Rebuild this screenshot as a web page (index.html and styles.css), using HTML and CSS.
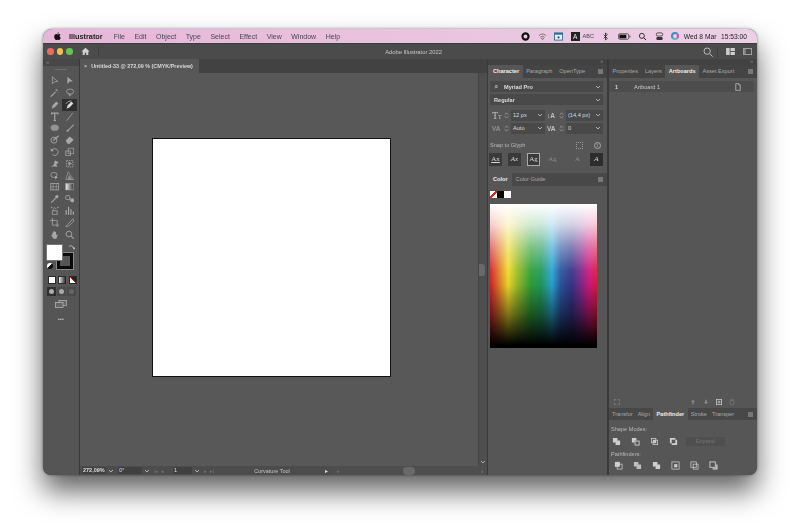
FILE: index.html
```html
<!DOCTYPE html>
<html lang="en">
<head>
<meta charset="utf-8">
<title>Adobe Illustrator 2022</title>
<link rel="stylesheet" href="styles.css">
</head>
<body>
<svg class="defs" aria-hidden="true">
  <symbol id="chev" viewBox="0 0 6 6"><path d="M1 2l2 2 2-2" fill="none" stroke="currentColor" stroke-width="1"/></symbol>
  <symbol id="updown" viewBox="0 0 6 10"><path d="M1 4l2-2 2 2M1 6l2 2 2-2" fill="none" stroke="currentColor" stroke-width=".8"/></symbol>
  <symbol id="menu" viewBox="0 0 6 6"><rect width="6" height="6" fill="currentColor"/></symbol>
  <symbol id="unite" viewBox="0 0 10 10"><path d="M1 1h5v3h3v5H4V6H1z" fill="currentColor"/></symbol>
  <symbol id="minus" viewBox="0 0 10 10"><path d="M1 1h5v3H4v2H1z" fill="currentColor"/><rect x="4.5" y="4.5" width="4.500" height="4.500" fill="none" stroke="currentColor"/></symbol>
  <symbol id="inter" viewBox="0 0 10 10"><rect x="1.500" y="1.500" width="5" height="5" fill="none" stroke="currentColor" stroke-width=".8"/><rect x="3.500" y="3.500" width="5" height="5" fill="none" stroke="currentColor" stroke-width=".8"/><rect x="3.500" y="3.500" width="3" height="3" fill="currentColor"/></symbol>
  <symbol id="excl" viewBox="0 0 10 10"><path d="M1 1h6v2H3v4H1zM7 3h2v6H3V7h4z" fill="currentColor"/></symbol>
  <symbol id="pf1" viewBox="0 0 10 10"><rect x="1" y="1" width="5.500" height="5.500" fill="currentColor"/><rect x="3.500" y="3.500" width="5.500" height="5.500" fill="none" stroke="currentColor" stroke-width=".8"/></symbol>
  <symbol id="pf2" viewBox="0 0 10 10"><path d="M1 1h5v3h3v5H4V6H1z" fill="currentColor" opacity=".85"/></symbol>
  <symbol id="pf4" viewBox="0 0 10 10"><rect x="1" y="1" width="8" height="8" fill="none" stroke="currentColor" stroke-width=".8"/><rect x="3.500" y="3.500" width="3.500" height="3.500" fill="currentColor"/></symbol>
  <symbol id="pf5" viewBox="0 0 10 10"><rect x="1" y="1" width="6" height="6" fill="none" stroke="currentColor" stroke-width=".8"/><rect x="3.500" y="3.500" width="5.500" height="5.500" fill="none" stroke="currentColor" stroke-width=".8"/></symbol>
  <symbol id="pf6" viewBox="0 0 10 10"><rect x="1" y="1" width="6" height="6" fill="none" stroke="currentColor"/><path d="M8 4h1.500v5.500H4V8h4z" fill="currentColor"/></symbol>
</svg>

<div class="window">
  <header class="menubar">
    <svg class="apple" viewBox="0 0 10 12"><path d="M7 0c0 1.200-1 2.300-2.100 2.300C4.800 1.100 6 .1 7 0zM5 3c.6 0 1.200-.5 2.200-.5.8 0 1.600.4 2.100 1.100-1.800 1-1.500 3.600.4 4.300-.5 1.300-1.500 3.100-2.600 3.100-.8 0-1-.5-2-.5s-1.300.5-2 .5C1.800 11 .3 8.500.3 6.300.3 4 1.700 2.600 3.200 2.600 4 2.600 4.500 3 5 3z"/></svg>
    <strong class="app">Illustrator</strong>
    <nav class="menus"><span>File</span><span>Edit</span><span>Object</span><span>Type</span><span>Select</span><span>Effect</span><span>View</span><span>Window</span><span>Help</span></nav>
    <div class="status">
      <svg class="st" viewBox="0 0 10 10"><circle cx="5" cy="5" r="3.400" fill="none" stroke="#111" stroke-width="2.400"/></svg>
      <svg class="st" viewBox="0 0 10 10"><path d="M1 4a6 6 0 0 1 8 0M2.500 5.700a4 4 0 0 1 5 0M5 8.500l-1.200-1.300a2 2 0 0 1 2.400 0z" fill="none" stroke="#555" stroke-width=".8"/></svg>
      <svg class="st" viewBox="0 0 10 10"><rect x=".5" y="1" width="9" height="8" fill="#e8f0f6" stroke="#2d6d9a"/><rect x=".5" y="1" width="9" height="2" fill="#2d6d9a"/><rect x="4" y="5" width="2" height="2" fill="#234"/></svg>
      <span class="kbd"><b>A</b><em>ABC</em></span>
      <svg class="st" viewBox="0 0 10 10"><path d="M3 3l4 4-2 2V1l2 2-4 4" fill="none" stroke="#222" stroke-width=".9"/></svg>
      <svg class="st wide" viewBox="0 0 14 8"><rect x=".5" y="1" width="11" height="6" rx="1.500" fill="none" stroke="#222" stroke-width=".7"/><rect x="1.500" y="2" width="7.500" height="4" fill="#111"/><rect x="12.300" y="3" width="1" height="2" fill="#333"/></svg>
      <svg class="st" viewBox="0 0 10 10"><circle cx="4.300" cy="4.300" r="2.800" fill="none" stroke="#222"/><path d="M6.300 6.300L9 9" stroke="#222" stroke-width="1.100"/></svg>
      <svg class="st" viewBox="0 0 10 10"><rect x="1.500" y="1" width="7" height="3.500" rx="1.500" fill="none" stroke="#222" stroke-width=".8"/><rect x="1.500" y="5.500" width="7" height="3.500" rx="1.500" fill="#333"/></svg>
      <span class="siri"></span>
      <span class="clock">Wed 8 Mar</span>
      <span class="clock">15:53:00</span>
    </div>
  </header>

  <div class="titlebar">
    <div class="tb-left">
      <i class="light red"></i><i class="light yellow"></i><i class="light green"></i>
      <svg class="home" viewBox="0 0 10 10"><path d="M5 .8L.4 5h1.500v4h2.300V6.300h1.600V9h2.300V5h1.500z" fill="#cfcfcf"/></svg>
      <i class="tb-sep"></i>
    </div>
    <div class="tb-title">Adobe Illustrator 2022</div>
    <div class="tb-right">
      <svg class="tb-ic" viewBox="0 0 12 12"><circle cx="5" cy="5" r="3.800" fill="none" stroke="#c4c4c4" stroke-width="1.100"/><path d="M8 8l3.500 3.500" stroke="#c4c4c4" stroke-width="1.200"/></svg>
      <i class="tb-sep"></i>
      <svg class="tb-ic2" viewBox="0 0 10 8"><rect width="4" height="8" fill="#cfcfcf"/><rect x="5" width="5" height="3.500" fill="#cfcfcf"/><rect x="5" y="4.500" width="5" height="3.500" fill="#cfcfcf"/></svg>
      <svg class="tb-ic2" viewBox="0 0 10 8"><rect x=".5" y=".5" width="9" height="7" fill="none" stroke="#aaa"/><rect x="1" y="1" width="2" height="6" fill="#888"/></svg>
    </div>
  </div>

  <div class="workspace">
    <aside class="tools">
      <div class="tools-top">&laquo;</div>
      <div class="tools-grip"></div>
      <div class="tool-grid">
        <svg viewBox="0 0 12 12"><path d="M3 1l7 6H6l-3 3z" fill="none" stroke="currentColor"/></svg>
        <svg viewBox="0 0 12 12"><path d="M3 1l7 6H6l-3 3z" fill="currentColor"/></svg>
        <svg viewBox="0 0 12 12"><path d="M1 11l6-6" stroke="currentColor" stroke-width="1.400"/><path d="M8 1v3M10 3H7M10.500 6l-1-1" stroke="currentColor" stroke-width=".8"/></svg>
        <svg viewBox="0 0 12 12"><ellipse cx="6.500" cy="4.500" rx="4.500" ry="3.200" fill="none" stroke="currentColor"/><path d="M4 6l2 5 1-2 2 1z" fill="currentColor"/></svg>
        <svg viewBox="0 0 12 12"><path d="M2 11l1.500-4.500L8 2l2.500 2.500L6 9z" fill="currentColor"/></svg>
        <span class="tool-on"><svg viewBox="0 0 12 12"><path d="M2 11l1.500-4.500L8 2l2.500 2.500L6 9z" fill="currentColor"/><path d="M1 5q2-4 7-4" fill="none" stroke="currentColor" stroke-width=".8"/></svg></span>
        <svg viewBox="0 0 12 12"><path d="M2 3V1.500h8V3M6 1.500V11M4.500 11h3" fill="none" stroke="currentColor" stroke-width="1.500"/></svg>
        <svg viewBox="0 0 12 12"><path d="M2 11L10 1" stroke="currentColor"/></svg>
        <svg viewBox="0 0 12 12"><ellipse cx="6" cy="6" rx="5" ry="3.800" fill="currentColor" opacity=".75" stroke="currentColor" stroke-width=".6"/></svg>
        <svg viewBox="0 0 12 12"><path d="M2 11c0-2 1-3 2.500-3L10.500 1.500l1 1L5 9c0 1.500-1.500 2-3 2z" fill="currentColor"/></svg>
        <svg viewBox="0 0 12 12"><circle cx="5" cy="6.500" r="3.800" fill="none" stroke="currentColor" stroke-width="1.100"/><path d="M4 7l7-6" stroke="currentColor" stroke-width="1.400"/></svg>
        <svg viewBox="0 0 12 12"><path d="M1 7l5-5 5 4-5 5H3z" fill="currentColor"/></svg>
        <svg viewBox="0 0 12 12"><path d="M2.500 4A4.300 4.300 0 1 1 3 9.500" fill="none" stroke="currentColor" stroke-width="1.100"/><path d="M1 1.500v4h4z" fill="currentColor"/></svg>
        <svg viewBox="0 0 12 12"><rect x="1" y="5" width="6" height="6" fill="none" stroke="currentColor"/><rect x="4" y="1.500" width="7" height="7" fill="none" stroke="currentColor" stroke-width=".8"/></svg>
        <svg viewBox="0 0 12 12"><path d="M1 10l4-3 1-5 5 2-3 3 1 3-4-1z" fill="currentColor"/></svg>
        <svg viewBox="0 0 12 12"><rect x="2" y="2" width="8" height="8" fill="none" stroke="currentColor" stroke-dasharray="2 1"/><path d="M4 3l5 3-3 1-1 3z" fill="currentColor"/></svg>
        <svg viewBox="0 0 12 12"><ellipse cx="5" cy="5" rx="4" ry="3.200" fill="none" stroke="currentColor"/><path d="M6 6l4 2-2 1-1 2z" fill="currentColor"/></svg>
        <svg viewBox="0 0 12 12"><path d="M1 11l3-10 7 10z" fill="none" stroke="currentColor" stroke-width=".8"/><path d="M3 11l2-6 5 6z" fill="currentColor" opacity=".7"/></svg>
        <svg viewBox="0 0 12 12"><rect x="1" y="2" width="10" height="8" fill="none" stroke="currentColor"/><path d="M1 6h10M4 2v8M8 2v8" stroke="currentColor" stroke-width=".7"/></svg>
        <svg viewBox="0 0 12 12"><defs><linearGradient id="g"><stop offset="0" stop-color="#eee"/><stop offset="1" stop-color="#333"/></linearGradient></defs><rect x="1" y="2" width="10" height="8" fill="url(#g)" stroke="#bbb" stroke-width=".6"/></svg>
        <svg viewBox="0 0 12 12"><path d="M1.500 11l6-6" stroke="currentColor" stroke-width="1.300"/><path d="M6 3l3-2 2 2-2 3z" fill="currentColor"/></svg>
        <svg viewBox="0 0 12 12"><rect x="1" y="2" width="5" height="5" rx="1" fill="none" stroke="currentColor"/><circle cx="9" cy="8" r="2.500" fill="currentColor"/><path d="M5 5l3 2" stroke="currentColor"/></svg>
        <svg viewBox="0 0 12 12"><path d="M3 6h6v5H3z" fill="none" stroke="currentColor"/><path d="M4 6V4l2-2 2 2" fill="none" stroke="currentColor"/><circle cx="2" cy="2" r=".9" fill="currentColor"/><circle cx="10" cy="2" r=".9" fill="currentColor"/></svg>
        <svg viewBox="0 0 12 12"><path d="M1.500 11V5M4.500 11V1M7.500 11V4M10.500 11V7" stroke="currentColor" stroke-width="1.500"/></svg>
        <svg viewBox="0 0 12 12"><path d="M3 0v9h9M0 3h9v9" fill="none" stroke="currentColor"/></svg>
        <svg viewBox="0 0 12 12"><path d="M1 11L10 1l1 3-7 7z" fill="none" stroke="currentColor"/></svg>
        <svg viewBox="0 0 12 12"><path d="M3 7V3.500h1V6V2h1.200v4V1.500h1.200V6V2.500h1.200V7l1.400-1.500.8.600L8 11H4.500L1.500 6.500l.8-.5z" fill="currentColor"/></svg>
        <svg viewBox="0 0 12 12"><circle cx="5" cy="5" r="3.600" fill="none" stroke="currentColor" stroke-width="1.100"/><path d="M7.700 7.700L11 11" stroke="currentColor" stroke-width="1.300"/></svg>
      </div>
      <div class="fillstroke">
        <span class="stroke"></span>
        <span class="fill"></span>
        <svg class="swap" viewBox="0 0 8 8"><path d="M1 3q3-3 6 2M5.500 4L7 6 7.800 3.800" fill="none" stroke="#ccc" stroke-width=".9"/></svg>
        <span class="mini"></span>
      </div>
      <div class="mode-row">
        <span class="mode solid"></span><span class="mode grad"></span><span class="mode none"></span>
      </div>
      <div class="draw-row">
        <span class="draw on"><i></i></span><span class="draw"><i></i></span><span class="draw off"><i></i></span>
      </div>
      <svg class="screen" viewBox="0 0 12 8"><rect x="4" y=".5" width="7.500" height="5" fill="#666" stroke="#bbb" stroke-width=".7"/><rect x=".5" y="2.500" width="7.500" height="5" fill="#666" stroke="#bbb" stroke-width=".7"/></svg>
      <div class="more">&bull;&bull;&bull;</div>
    </aside>

    <main class="doc">
      <div class="doc-tabs">
        <div class="doc-tab"><span class="x">&times;</span>Untitled-33 @ 272,09 % (CMYK/Preview)</div>
      </div>
      <div class="doc-mid">
        <div class="canvas"><div class="artboard"></div></div>
        <div class="vscroll"><i class="thumb"></i><svg class="vchev"><use href="#chev"/></svg></div>
      </div>
      <footer class="statusbar">
        <span class="sb-field zoom">272,09%</span><svg class="ch"><use href="#chev"/></svg>
        <span class="sb-field angle">0°</span><svg class="ch"><use href="#chev"/></svg>
        <span class="sb-nav dim">|◂ &nbsp;◂</span>
        <span class="sb-field page">1</span><svg class="ch"><use href="#chev"/></svg>
        <span class="sb-nav dim">▸ &nbsp;▸|</span>
        <span class="sb-tool">Curvature Tool</span>
        <span class="sb-play">▸</span>
        <div class="hscroll"><span>‹</span><i></i><span>›</span></div>
      </footer>
    </main>

    <section class="col col1">
      <div class="dock-top">&raquo;</div>
      <div class="tabs">
        <span class="tab on grip">Character</span><span class="tab">Paragraph</span><span class="tab">OpenType</span>
        <svg class="pmenu"><use href="#menu"/></svg>
      </div>
      <div class="char">
        <div class="field f-full"><span class="searchq">⌕</span><b>Myriad Pro</b><svg class="ch"><use href="#chev"/></svg></div>
        <div class="field f-full"><b>Regular</b><svg class="ch"><use href="#chev"/></svg></div>
        <div class="char-grid">
          <div class="metric"><span class="m-ic big">T<small>T</small></span><svg class="ud"><use href="#updown"/></svg><div class="field"><b>12 px</b><svg class="ch"><use href="#chev"/></svg></div></div>
          <div class="metric"><span class="m-ic">↕A</span><svg class="ud"><use href="#updown"/></svg><div class="field"><b>(14,4 px)</b><svg class="ch"><use href="#chev"/></svg></div></div>
          <div class="metric"><span class="m-ic dimmed">VA</span><svg class="ud"><use href="#updown"/></svg><div class="field"><b>Auto</b><svg class="ch"><use href="#chev"/></svg></div></div>
          <div class="metric"><span class="m-ic">VA</span><svg class="ud"><use href="#updown"/></svg><div class="field"><b>0</b><svg class="ch"><use href="#chev"/></svg></div></div>
        </div>
        <div class="snap-head"><span>Snap to Glyph</span><span class="snap-ic"><i class="sq"></i><i class="info">i</i></span></div>
        <div class="glyphs">
          <span class="g on u">Ax</span><span class="g on it">Ax</span><span class="g on box">Ag</span><span class="g off">Ag</span><span class="g-gap"></span><span class="g off">A</span><span class="g dark it">A</span>
        </div>
      </div>
      <div class="tabs tabs2">
        <span class="tab on grip">Color</span><span class="tab">Color Guide</span>
        <svg class="pmenu"><use href="#menu"/></svg>
      </div>
      <div class="color">
        <div class="chips"><i class="c-none"></i><i class="c-black"></i><i class="c-white"></i></div>
        <div class="spectrum"></div>
      </div>
    </section>

    <section class="col col2">
      <div class="dock-top">&raquo;</div>
      <div class="tabs">
        <span class="tab">Properties</span><span class="tab">Layers</span><span class="tab on">Artboards</span><span class="tab">Asset Export</span>
        <svg class="pmenu"><use href="#menu"/></svg>
      </div>
      <div class="boards">
        <div class="board-row"><span class="b-num">1</span><span class="b-name">Artboard 1</span>
          <svg class="b-ic" viewBox="0 0 8 10"><path d="M1 .5h4l2 2v7H1z" fill="none" stroke="#ccc" stroke-width=".9"/><path d="M5 .5v2h2" fill="none" stroke="#ccc" stroke-width=".7"/></svg>
        </div>
        <div class="boards-foot">
          <svg class="bf far dimic" viewBox="0 0 8 8"><path d="M.5 3V.5H3M5 .5h2.500V3M7.500 5v2.500H5M3 7.500H.5V5" fill="none" stroke="#888"/></svg>
          <span class="bf-right">
            <svg class="bf dimic" viewBox="0 0 8 8"><path d="M4 1l3 3H5v3H3V4H1z" fill="#888"/></svg>
            <svg class="bf dimic" viewBox="0 0 8 8"><path d="M4 7L1 4h2V1h2v3h2z" fill="#888"/></svg>
            <svg class="bf" viewBox="0 0 8 8"><rect x=".5" y=".5" width="7" height="7" fill="none" stroke="#ccc"/><path d="M4 2v4M2 4h4" stroke="#ccc"/></svg>
            <svg class="bf dimic" viewBox="0 0 8 8"><path d="M1.500 2h5v5.500h-5zM1 1h6" fill="none" stroke="#777"/></svg>
          </span>
        </div>
      </div>
      <div class="tabs tabs3">
        <span class="tab">Transfor</span><span class="tab">Align</span><span class="tab on">Pathfinder</span><span class="tab">Stroke</span><span class="tab">Transper</span>
        <svg class="pmenu"><use href="#menu"/></svg>
      </div>
      <div class="pathfinder">
        <div class="pf-label">Shape Modes:</div>
        <div class="pf-row pf-modes">
          <svg><use href="#unite"/></svg><svg><use href="#minus"/></svg><svg><use href="#inter"/></svg><svg><use href="#excl"/></svg>
          <span class="expand">Expand</span>
        </div>
        <div class="pf-label pf-l2">Pathfinders:</div>
        <div class="pf-row pf-finders">
          <svg><use href="#pf1"/></svg><svg><use href="#pf2"/></svg><svg><use href="#unite"/></svg><svg><use href="#pf4"/></svg><svg><use href="#pf5"/></svg><svg><use href="#pf6"/></svg>
        </div>
      </div>
    </section>
  </div>
</div>
</body>
</html>
```

FILE: styles.css
```css
* { box-sizing: border-box; }
html, body { margin: 0; height: 100%; }
body {
  width: 800px; height: 532px; overflow: hidden;
  background: #fff;
  padding: 29px 43px 57px;
  font-family: "Liberation Sans", Arial, sans-serif;
  color: #d0d0d0;
}
.defs { display: none; }
.window {
  width: 714px; height: 446px;
  display: flex; flex-direction: column;
  border-radius: 9px 9px 8px 8px;
  overflow: hidden;
  background: #575757;
  filter: blur(.4px);
  box-shadow: 0 16px 28px rgba(0,0,0,.62), 0 0 3px rgba(0,0,0,.45);
}

/* mac menu bar */
.menubar {
  height: 14px; flex: none;
  display: flex; align-items: center;
  background: linear-gradient(90deg, #e6b6d8, #ecd0e6);
  color: #4a4550;
  font-size: 7px;
  padding: 0 10px 0 11px;
}
.apple { width: 7px; height: 9px; fill: #111; }
.app { margin-left: 8px; font-size: 7.300px; color: #222; }
.menus { display: flex; gap: 9.500px; margin-left: 11px; }
.status { margin-left: auto; display: flex; align-items: center; gap: 7.500px; }
.st { width: 9px; height: 9px; }
.st.wide { width: 13px; }
.kbd { display: flex; align-items: center; gap: 3px; }
.kbd b { width: 9px; height: 9px; background: #222; color: #eee; font-size: 6.500px; line-height: 9px; text-align: center; font-weight: 400; }
.kbd em { font-style: normal; font-size: 5.500px; color: #444; }
.siri { width: 8px; height: 8px; border-radius: 50%; border: 2px solid #3b8fc9; border-right-color: #c85a9c; border-bottom-color: #68b8a5; }
.clock { color: #222; font-size: 6.700px; margin-left: -3px; }

/* window title bar */
.titlebar {
  height: 16px; flex: none;
  display: grid; grid-template-columns: 1fr auto 1fr;
  align-items: center;
  background: #4b4b4b;
  padding: 0 5px 0 4px;
  border-top: 1px solid #3c3c3c;
}
.tb-left { display: flex; align-items: center; }
.light { width: 6.500px; height: 6.500px; border-radius: 50%; margin-right: 3px; }
.red { background: #ec6a5e; }
.yellow { background: #f4bf4f; }
.green { background: #61c554; }
.home { width: 9px; height: 9px; margin-left: 5px; }
.tb-sep { width: 1px; height: 10px; background: #3e3e3e; margin-left: 8px; }
.tb-title { font-size: 5.800px; color: #c8c8c8; padding-left: 28px; }
.tb-right { display: flex; align-items: center; justify-content: flex-end; }
.tb-ic { width: 10px; height: 10px; }
.tb-ic2 { width: 9px; height: 7px; margin-left: 8px; }
.tb-right .tb-sep { margin: 0 0 0 4px; height: 10px; }

.workspace { flex: 1; display: flex; min-height: 0; }

/* tool bar */
.tools {
  width: 37px; flex: none;
  background: #555;
  border-right: 1px solid #3a3a3a;
  display: flex; flex-direction: column;
  color: #a8a8a8;
}
.tools-top { height: 7px; background: #474747; font-size: 6px; line-height: 6px; padding-left: 3px; color: #888; }
.tools-grip { height: 9px; }
.tools-grip::after { content: ""; display: block; width: 12px; height: 1px; background: #6c6c6c; margin: 3px auto 0; }
.tool-grid {
  display: grid; grid-template-columns: 15px 15px; grid-auto-rows: 11.800px;
  justify-items: center; align-items: center;
  padding-left: 4px; margin-top: 0;
}
.tool-grid svg { width: 9.500px; height: 9.500px; display: block; }
.tool-on { width: 15px; height: 12px; background: #2f2f2f; display: flex; align-items: center; justify-content: center; color: #ddd; }
.fillstroke { position: relative; height: 29px; margin: 4px 0 0 3px; width: 30px; }
.fill { position: absolute; left: 0; top: 0; width: 17px; height: 17px; background: #fff; border: 1px solid #777; }
.stroke { position: absolute; left: 11px; top: 9px; width: 16px; height: 16px; border: 3px solid #0a0a0a; outline: 1px solid #888; background: #555; }
.swap { position: absolute; left: 22px; top: 0; width: 7px; height: 7px; }
.mini { position: absolute; left: 1px; top: 19px; width: 6px; height: 6px; background: linear-gradient(135deg,#fff 50%,#111 50%); border-radius: 50%; }
.mode-row { display: flex; gap: 2px; margin: 3px 0 0 5px; }
.mode { width: 8px; height: 8px; border: 1px solid #2a2a2a; }
.solid { background: #fff; }
.grad { background: linear-gradient(90deg,#eee,#333); }
.none { background: linear-gradient(45deg,#fff 42%,#d21 42%,#d21 58%,#222 58%); margin-left: 1px; }
.draw-row { display: flex; gap: 1px; margin: 3px 0 0 4px; }
.draw { width: 9px; height: 9px; display: flex; align-items: center; justify-content: center; background: #4a4a4a; }
.draw.on { background: #2f2f2f; }
.draw i { width: 5px; height: 5px; border-radius: 50%; background: #aaa; }
.draw.off i { background: #666; }
.screen { width: 12px; height: 8px; margin: 4px 0 0 12px; }
.more { font-size: 5px; text-align: center; margin-top: 8px; color: #ccc; letter-spacing: .2px; }

/* document */
.doc { flex: 1; min-width: 0; display: flex; flex-direction: column; }
.doc-tabs { height: 14px; flex: none; background: #424242; display: flex; }
.doc-tab {
  width: 119px; background: #575757; font-size: 5.400px; font-weight: 700; color: #d8d8d8;
  line-height: 14px; padding-left: 4px; white-space: nowrap;
}
.x { margin-right: 4px; font-weight: 400; }
.doc-mid { flex: 1; display: flex; min-height: 0; }
.canvas { flex: 1; background: #585858; padding: 65px 0 0 72px; border-right: 1px solid #444; }
.artboard { width: 239px; height: 239px; background: #fff; border: 1px solid #111; }
.vscroll {
  width: 8px; flex: none; background: #4e4e4e; position: relative;
  display: flex; flex-direction: column; justify-content: flex-end; align-items: center;
  padding-bottom: 1px; color: #aaa;
}
.thumb { position: absolute; left: 0; top: 191px; width: 6px; height: 12px; background: #696969; border-radius: 0 3px 3px 0; }
.vchev { width: 6px; height: 6px; }
.statusbar {
  height: 9px; flex: none; background: #4c4c4c;
  display: flex; align-items: center;
  font-size: 5.500px; color: #cfcfcf; padding-left: 2px;
}
.sb-field { background: #404040; height: 7px; line-height: 7px; padding-left: 1px; color: #ddd; }
.zoom { width: 24px; font-weight: 700; }
.angle { width: 24px; margin-left: 4px; }
.page { width: 19px; }
.ch { width: 6px; height: 6px; color: #b0b0b0; flex: none; }
.statusbar .ch { margin-left: 2px; }
.sb-nav { width: 17px; font-size: 5px; margin: 0 2px 0 4px; white-space: nowrap; color: #777; }
.sb-tool { width: 98px; text-align: center; color: #c4c4c4; }
.sb-play { color: #ddd; font-size: 6px; width: 8px; margin-left: 4px; }
.hscroll { flex: 1; display: flex; align-items: center; justify-content: space-between; background: #4e4e4e; height: 9px; padding: 0 4px; color: #999; }
.hscroll i { width: 12px; height: 8px; background: #696969; border-radius: 4px; margin-right: 3px; }

/* panel columns */
.col { flex: none; background: #565656; display: flex; flex-direction: column; }
.col1 { width: 120px; border-left: 1px solid #3a3a3a; }
.col2 { width: 150px; border-left: 2px solid #3a3a3a; }
.dock-top { height: 6px; background: #424242; font-size: 5px; line-height: 5px; text-align: right; padding-right: 4px; color: #888; }
.tabs { height: 13px; flex: none; display: flex; align-items: stretch; background: #444; font-size: 5.600px; color: #a9a9a9; position: relative; }
.tab { padding: 0 3.500px; line-height: 13px; white-space: nowrap; }
.tab.on { background: #565656; color: #eee; font-weight: 700; }
.tab.grip { padding-left: 5px; }
.pmenu { position: absolute; right: 4px; top: 4px; width: 5px; height: 5px; color: #777; }

/* character panel */
.char { height: 95px; flex: none; padding: 3px 4px 0 2px; }
.field { background: #494949; height: 11px; display: flex; align-items: center; justify-content: space-between; font-size: 5.600px; padding: 0 2px 0 2px; color: #ddd; flex: 1; min-width: 0; }
.field b { font-weight: 400; white-space: nowrap; }
.f-full { margin-bottom: 2px; padding-left: 4px; flex: none; }
.searchq { color: #bbb; font-size: 8px; line-height: 8px; margin-right: 3px; width: 7px; }
.f-full b { margin-right: auto; font-weight: 700; }
.char-grid { display: grid; grid-template-columns: 53px 56px; column-gap: 2px; row-gap: 1px; margin: 4px 0 0 2px; }
.metric { display: flex; align-items: center; height: 12px; }
.m-ic { width: 11px; font-size: 6.500px; color: #c0c0c0; white-space: nowrap; flex: none; font-weight: 700; overflow: hidden; }
.m-ic.big { font-size: 10px; font-family: "Liberation Serif", serif; font-weight: 400; }
.m-ic small { font-size: 6px; }
.m-ic.dimmed { color: #8e8e8e; }
.ud { width: 5px; height: 9px; color: #b5b5b5; margin: 0 2px 0 1px; flex: none; }
.snap-head { display: flex; justify-content: space-between; align-items: center; font-size: 5.600px; color: #b9b9b9; margin-top: 6px; height: 10px; }
.snap-ic { display: flex; gap: 11px; align-items: center; padding-right: 2px; }
.sq { width: 7px; height: 7px; border: 1px dotted #999; }
.info { width: 7px; height: 7px; border: 1px solid #aaa; border-radius: 50%; font-size: 5px; line-height: 5px; text-align: center; font-style: normal; }
.glyphs { display: flex; gap: 6px; margin: 3px 0 0 -1px; }
.g { width: 13px; height: 13px; font-size: 7px; line-height: 13px; text-align: center; font-family: "Liberation Serif", serif; color: #d8d8d8; }
.g.on { background: #3a3a3a; }
.g.u { text-decoration: underline; }
.g.it { font-style: italic; }
.g.box { outline: 1px solid #aaa; outline-offset: -1px; }
.g.off { color: #8c8c8c; }
.g.dark { background: #2d2d2d; color: #ddd; }
.g-gap { width: 0; }
.tabs2 { height: 13px; background: #484848; }
.tabs2 .tab { padding: 0 4px; }
.tabs2 .tab.grip { padding-left: 5px; }
.color { flex: 1; padding: 5px 9px 0 2px; }
.chips { display: flex; height: 7px; margin-bottom: 6px; }
.chips i { width: 7px; height: 7px; }
.c-none { background: linear-gradient(135deg,#fff 40%,#d22 40%,#d22 60%,#fff 60%); }
.c-black { background: #000; }
.c-white { background: #fff; }
.spectrum {
  width: 107px; height: 144px;
  background:
    linear-gradient(180deg, #fff 0%, rgba(255,255,255,.78) 14%, rgba(255,255,255,.38) 30%, rgba(255,255,255,.06) 46%, rgba(0,0,0,.04) 56%, rgba(0,0,0,.45) 76%, rgba(0,0,0,.85) 92%, #000 98%),
    linear-gradient(90deg, #d01f2a 0%, #e0752a 8%, #eedb2a 17%, #98bb2a 26%, #30a036 38%, #22995f 48%, #2aa5d4 58%, #2c55a0 66%, #36358a 76%, #80298a 85%, #d2187c 93%, #dc1a3c 100%);
}

/* right column */
.boards { flex: 1; padding: 3px 2px 0 0; display: flex; flex-direction: column; min-height: 0; }
.board-row { height: 11px; display: flex; align-items: center; font-size: 5.600px; background: #4d4d4d; margin-right: 1px; color: #d4d4d4; }
.b-num { width: 25px; padding-left: 6px; font-weight: 700; }
.b-name { flex: 1; color: #c8c8c8; }
.b-ic { width: 6px; height: 8px; margin-right: 13px; }
.boards-foot { margin-top: auto; height: 12px; display: flex; align-items: center; justify-content: space-between; padding: 0 20px 0 5px; }
.bf { width: 6px; height: 6px; display: block; }
.bf-right { display: flex; gap: 7px; }
.tabs3 { background: #484848; height: 12px; }
.tabs3 .tab { line-height: 12px; padding: 0 2.500px; }
.tabs3 .tab:first-child { padding-left: 3px; }
.tabs3 .tab.on { padding: 0 4px; }
.pathfinder { height: 55px; flex: none; padding: 5px 0 0 2px; font-size: 5.600px; color: #b9b9b9; }
.pf-label { height: 8px; line-height: 8px; }
.pf-l2 { margin-top: 3px; }
.pf-row { display: flex; align-items: center; gap: 10px; height: 12px; margin-top: 2px; padding-left: 1px; color: #cfcfcf; }
.pf-finders { padding-left: 3px; margin-top: 1px; }
.pf-row svg { width: 9px; height: 9px; flex: none; }
.expand { width: 39px; height: 9px; background: #4f4f4f; color: #757575; text-align: center; line-height: 9px; margin-left: -2px; }
```
